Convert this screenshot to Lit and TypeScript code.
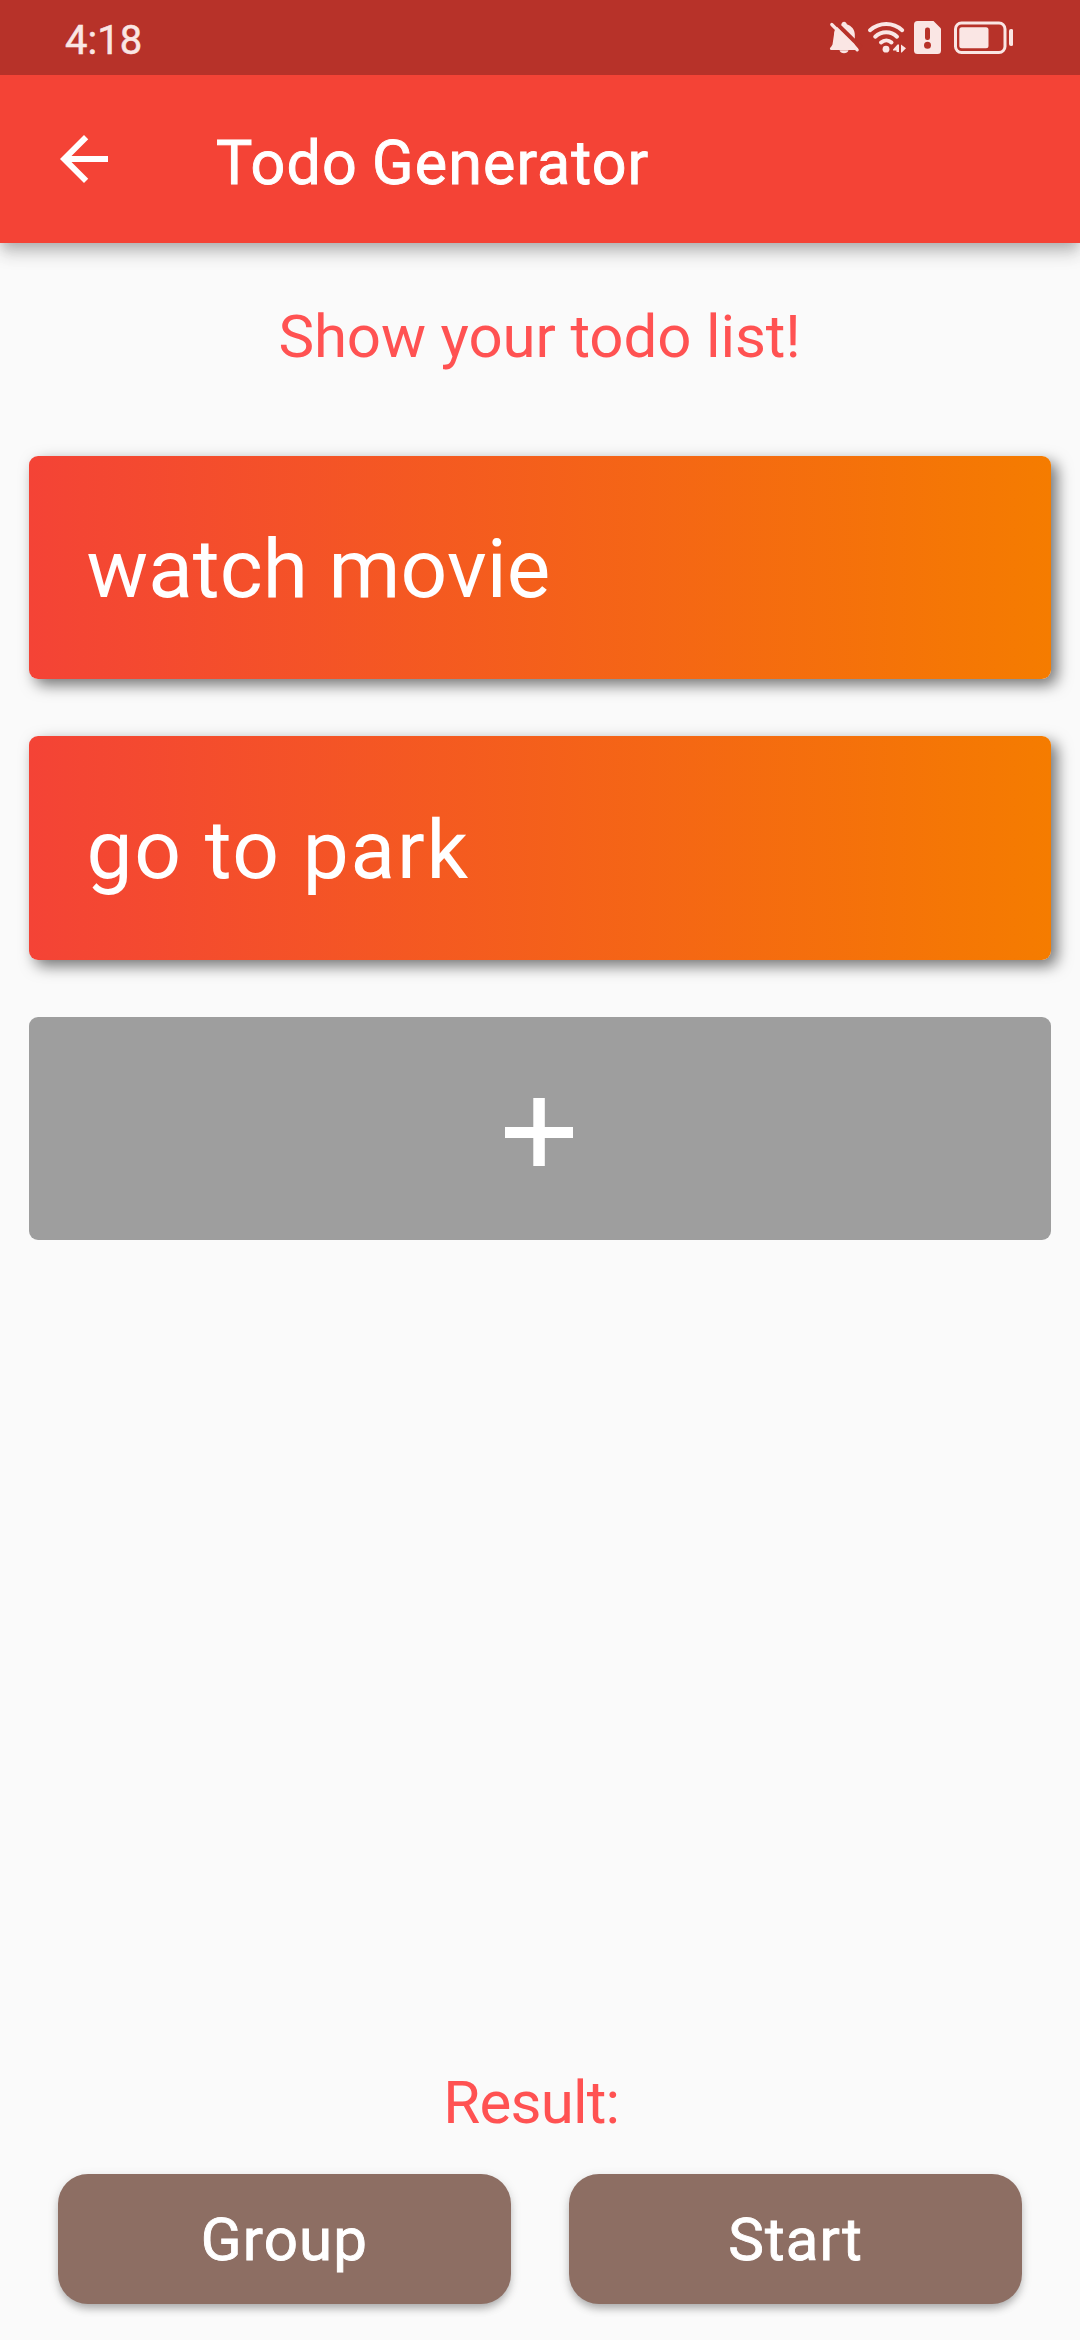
import { LitElement, html, css } from "lit";
import { customElement, property, state } from "lit/decorators.js";

@customElement("status-bar")
export class StatusBar extends LitElement {
  static styles = css`
    :host {
      position: relative;
      z-index: 1;
      display: flex;
      justify-content: space-between;
      box-sizing: border-box;
      height: 75px;
      padding: 0 67px 0 65px;
      background: #b73229;
      color: #fae6e4;
    }
    .time {
      padding-top: 6px;
      font-size: 40px;
      line-height: 69px;
      -webkit-text-stroke: 0.5px currentColor;
    }
    .icons {
      display: flex;
      padding-top: 20px;
    }
    .icons svg {
      display: block;
      height: 36px;
      fill: currentColor;
    }
    .line {
      fill: none;
      stroke: currentColor;
      stroke-linecap: round;
    }
    .cut {
      stroke: #b73229;
      stroke-linecap: butt;
    }
    .hole {
      fill: #b73229;
    }
  `;

  render() {
    return html`
      <div class="time">4:18</div>
      <div class="icons">
        <svg width="38" viewBox="828 20 38 36">
          <path d="M841.5 24.5C841.5 20.800 846.500 20.800 846.800 24.300C851.500 26 854.800 29.500 854.800 34.500V44.500L858 48.500V50H831C829.500 50 829.500 47.500 831 47L832.500 44.500L834 34.500C834 29.500 837 26 841.500 24.500Z" />
          <path d="M839.500 50.300H848.500C847.800 54.200 840.200 54.200 839.500 50.300Z" />
          <path class="line cut" stroke-width="4" d="M833.500 20.500L861 47.500" />
          <path class="line" stroke-width="3.200" d="M831.800 24.500L857.200 49.800" />
        </svg>
        <svg width="48" viewBox="866 20 48 36">
          <path class="line" stroke-width="4" d="M870 30.200C879.500 22 893 22 902.200 30.200" />
          <path class="line" stroke-width="4" d="M875.200 36.700C881.500 30.800 891 30.800 897 36.700" />
          <path class="line" stroke-width="4" d="M881 42.500C884.200 39.700 888.500 39.700 891.500 42.500" />
          <circle cx="886" cy="49.200" r="3.400" />
          <path d="M893 49.500L897.500 44.500H899V52H896.500V50.500H893ZM901 44.500L906 48.300L901.800 52.500H901Z" />
        </svg>
        <svg width="40" viewBox="914 20 40 36">
          <path d="M917.500 21H933.500L941 28.500V50.500Q941 54 937.500 54H917.500Q914 54 914 50.500V24.500Q914 21 917.500 21Z" />
          <rect class="hole" x="925" y="27.500" width="5" height="12.500" rx="2.200" />
          <circle class="hole" cx="927.500" cy="45.300" r="3.500" />
        </svg>
        <svg width="59" viewBox="954 20 59 36">
          <rect class="line" stroke-width="3" x="955.500" y="23" width="49.500" height="29.500" rx="6" />
          <rect x="959.300" y="27.300" width="29.200" height="21" rx="2.500" />
          <rect x="1009" y="29" width="4.300" height="17" rx="2" />
        </svg>
      </div>
    `;
  }
}

@customElement("app-bar")
export class AppBar extends LitElement {
  @property() heading = "";

  static styles = css`
    :host {
      display: flex;
      align-items: center;
      box-sizing: border-box;
      height: 168px;
      padding-left: 48px;
      background: #f44336;
      color: #fff;
      box-shadow: 0 6px 12px -3px rgba(0, 0, 0, 0.2),
        0 12px 15px rgba(0, 0, 0, 0.13), 0 3px 28px rgba(0, 0, 0, 0.06);
    }
    .back {
      width: 72px;
      height: 72px;
      fill: currentColor;
    }
    .title {
      padding: 8px 0 0 96px;
      font-size: 61px;
      line-height: 72px;
      letter-spacing: 1.1px;
      word-spacing: -2px;
      -webkit-text-stroke: 0.9px currentColor;
    }
  `;

  render() {
    return html`
      <svg class="back" viewBox="0 0 24 24">
        <path d="M20 11H7.830l5.590-5.590L12 4l-8 8 8 8 1.410-1.410L7.830 13H20z" />
      </svg>
      <div class="title">${this.heading}</div>
    `;
  }
}

@customElement("app-root")
export class AppRoot extends LitElement {
  @state() private todos = [
    { text: "watch movie", tracking: "0.12px" },
    { text: "go to park", tracking: "1.7px" },
  ];

  static styles = css`
    :host {
      display: flex;
      flex-direction: column;
      width: 1080px;
      height: 2340px;
      overflow: hidden;
      background: #fafafa;
      font-family: Roboto, "Liberation Sans", sans-serif;
      white-space: nowrap;
    }
    .caption {
      color: #ff5252;
      font-size: 60px;
      line-height: 72px;
      text-align: center;
    }
    .intro {
      padding: 57.500px 1px 83.200px 0;
      letter-spacing: -0.13px;
    }
    .list {
      display: flex;
      flex: 1;
      flex-direction: column;
      gap: 57.600px;
      padding: 0 28.800px;
    }
    .card {
      display: flex;
      align-items: center;
      box-sizing: border-box;
      height: 223.200px;
      border-radius: 9px;
    }
    .todo {
      padding: 3px 0 0 57.600px;
      background: linear-gradient(90deg, #f44336, #f57c00);
      box-shadow: 6px 6px 15px rgba(0, 0, 0, 0.54);
      color: #fff;
      font-size: 82px;
      line-height: 98px;
    }
    .add {
      justify-content: center;
      padding: 6px 2px 0 0;
      background: #9e9e9e;
    }
    .add svg {
      width: 68px;
      height: 68px;
      fill: #fff;
    }
    .result {
      padding: 0 17.400px 35.100px 0;
      letter-spacing: -0.78px;
    }
    .actions {
      display: grid;
      grid-template-columns: 1fr 1fr;
      gap: 57.600px;
      padding: 0 57.600px 36.300px;
    }
    .button {
      box-sizing: border-box;
      height: 129.400px;
      padding-top: 3px;
      border-radius: 30px;
      background: #8d6e63;
      box-shadow: 0 6px 8px -2px rgba(0, 0, 0, 0.26),
        0 3px 12px rgba(0, 0, 0, 0.12);
      color: #fff;
      font-size: 60px;
      line-height: 126.400px;
      letter-spacing: 1.100px;
      text-align: center;
      -webkit-text-stroke: 0.900px currentColor;
    }
  `;

  render() {
    return html`
      <status-bar></status-bar>
      <app-bar heading="Todo Generator"></app-bar>
      <div class="caption intro">Show your todo list!</div>
      <div class="list">
        ${this.todos.map(
          (todo) => html`
            <div class="card todo" style="letter-spacing: ${todo.tracking}">${todo.text}</div>
          `
        )}
        <div class="card add">
          <svg viewBox="0 0 68 68">
            <path d="M28.300 0h11.500v28.900H68v11.200H39.800V68H28.300V40.100H0V28.900h28.300z" />
          </svg>
        </div>
      </div>
      <div class="caption result">Result:</div>
      <div class="actions">
        <div class="button">Group</div>
        <div class="button">Start</div>
      </div>
    `;
  }
}
